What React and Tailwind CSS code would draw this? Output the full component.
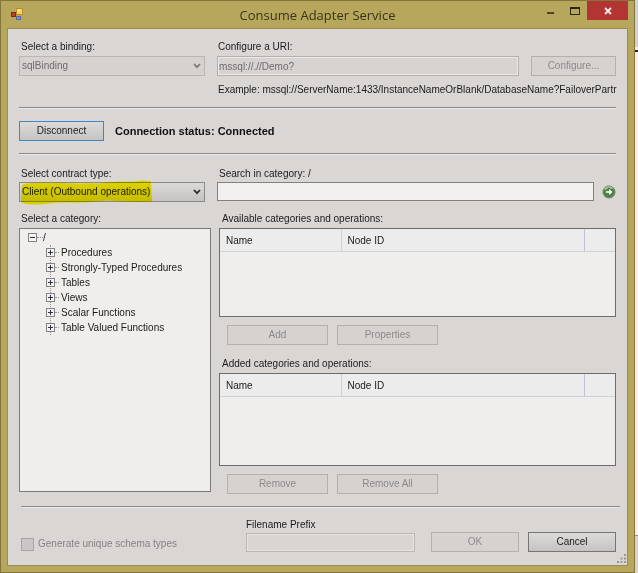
import { useState } from 'react';
import clsx from 'clsx';

const CATEGORIES = [
  'Procedures',
  'Strongly-Typed Procedures',
  'Tables',
  'Views',
  'Scalar Functions',
  'Table Valued Functions',
];

function Button({ className, disabled, focused, children, ...props }) {
  return (
    <button
      type="button"
      disabled={disabled}
      className={clsx(
        'h-5 shrink-0 border text-center leading-[18px]',
        disabled && 'border-[#b3b0ad] bg-[#d5d2d0] text-[#8d8a88]',
        !disabled && 'bg-linear-to-b from-[#dddbda] to-[#c6c4c3] text-[#1c1b1b]',
        !disabled && (focused ? 'border-[#3f88c5]' : 'border-[#777574]'),
        className
      )}
      {...props}
    >
      {children}
    </button>
  );
}

function Divider({ className }) {
  return <hr className={clsx('h-[2px] border-t border-b border-t-[#8b8988] border-b-[#eceae9]', className)} />;
}

function Select({ id, disabled, value, onChange, options, children }) {
  return (
    <div className="relative">
      <select
        id={id}
        disabled={disabled}
        value={value}
        onChange={onChange}
        className={clsx(
          'block h-5 w-full appearance-none border pl-[2px] leading-[18px] opacity-100',
          disabled
            ? 'border-[#b9b6b4] bg-[#d5d2d0] text-[#6f6c6b]'
            : 'border-[#8c8a89] bg-linear-to-b from-[#dcdad9] to-[#c5c3c1] text-[#1c1b1b]'
        )}
      >
        {options.map((o) => (
          <option key={o}>{o}</option>
        ))}
      </select>
      <svg className="pointer-events-none absolute top-[7px] right-1 h-[6px] w-[8px]" viewBox="0 0 8 6" fill="none">
        <path d="M1 1l3 3.2L7 1" stroke={disabled ? '#7b7978' : '#2a2929'} strokeWidth="1.7" />
      </svg>
      {children}
    </div>
  );
}

// Marker stroke over the selected contract type
function Highlight() {
  return (
    <svg
      className="pointer-events-none absolute -top-[2px] left-0 h-[26px] w-[134px] mix-blend-multiply"
      viewBox="0 0 134 26"
    >
      <path
        d="M4 4C14 2 28 3 40 2.500C54 4 66 3 80 3.500C92 1 106 2 116 1.500C122 0 128 1 132 1.500L133 21.500C120 22.500 104 22 90 20.500C76 22 62 23 48 22.500C38 22 30 24 20 24.500C12 25 4 24 2 22C3 17 1 10 4 4Z"
        fill="#fff600"
      />
    </svg>
  );
}

function Expander({ open }) {
  return (
    <svg className="h-[9px] w-[9px] shrink-0" viewBox="0 0 9 9" shapeRendering="crispEdges">
      <rect x="0.5" y="0.5" width="8" height="8" fill="#f3f2f2" stroke="#858382" />
      <path d={open ? 'M2 4.500h5' : 'M2 4.500h5M4.500 2v5'} stroke="#2f3040" />
    </svg>
  );
}

function OperationList({ label, className }) {
  return (
    <div className={clsx('border border-[#6d6b6b] bg-[#efeeed]', className)}>
      <table aria-label={label} className="w-full table-fixed border-collapse">
        <thead>
          <tr className="h-[22px] border-b border-[#cfd0da] bg-[#ececec] text-left">
            <th className="w-[121px] border-r border-[#cfd0da] pt-[2px] pl-[6px] font-normal">Name</th>
            <th className="border-r border-[#c3c4cf] pt-[2px] pl-[6px] font-normal">Node ID</th>
            <th className="w-[31px]" />
          </tr>
        </thead>
        <tbody />
      </table>
    </div>
  );
}

function AppIcon() {
  return (
    <svg className="h-[13px] w-[13px]" viewBox="0 0 13 13">
      <rect x="0.5" y="4.500" width="4" height="4" fill="#b8402c" stroke="#7c2a1e" />
      <rect x="5.500" y="0.5" width="6" height="6" fill="#f3cf62" stroke="#b98d27" />
      <rect x="6.500" y="1.500" width="3" height="2" fill="#fbe9a8" />
      <rect x="5.500" y="8.500" width="4" height="3" fill="#7d90c6" stroke="#5a6ba3" />
    </svg>
  );
}

function TitleBar() {
  return (
    <header className="flex h-[27px] shrink-0 items-start">
      <div className="flex w-[90px] pt-[7px] pl-1">
        <AppIcon />
      </div>
      <h1 className="flex-1 text-center font-['Open_Sans',sans-serif] text-[13px] leading-[28px] text-[#3a3418]">
        Consume Adapter Service
      </h1>
      <div className="flex w-[90px] justify-end">
        <button type="button" aria-label="Minimize" className="flex h-[19px] w-[25px] justify-center pt-[11px]">
          <span className="h-[2px] w-[7px] bg-[#4b4425]" />
        </button>
        <button type="button" aria-label="Maximize" className="flex h-[19px] w-[25px] justify-center pt-[6px]">
          <span className="h-[8px] w-[10px] border border-t-2 border-[#2b2612]" />
        </button>
        <button type="button" aria-label="Close" className="flex h-[19px] w-[41px] justify-center bg-[#b23433] pt-[6px]">
          <svg className="h-2 w-2" viewBox="0 0 8 8">
            <path d="M1 1l6 6M7 1l-6 6" stroke="#f6eceb" strokeWidth="1.8" />
          </svg>
        </button>
      </div>
    </header>
  );
}

export default function App() {
  const [contract, setContract] = useState('Client (Outbound operations)');
  const [search, setSearch] = useState('');

  return (
    <div className="flex min-h-screen bg-[#f7efe4] font-['Liberation_Sans',Arial,sans-serif] text-[10px] leading-4 text-[#1c1b1b]">
      <div className="flex min-w-0 flex-1 flex-col border border-[#84763a] bg-[#b7a75c] px-[6px] pb-[6px]">
        <TitleBar />

        <main className="flex min-w-0 flex-1 flex-col border border-[#9c8d4e] bg-[#d9d6d4] px-[11px] pt-[10px]">
          <section className="flex gap-3">
            <div className="w-[186px] shrink-0">
              <label htmlFor="binding" className="mb-[1px] block pl-[2px]">Select a binding:</label>
              <Select id="binding" disabled value="sqlBinding" options={['sqlBinding']} />
            </div>
            <div className="min-w-0 flex-1">
              <label htmlFor="uri" className="mb-[1px] block pl-[1px]">Configure a URI:</label>
              <div className="flex gap-3">
                <input
                  id="uri"
                  disabled
                  value="mssql://.//Demo?"
                  className="h-5 min-w-0 flex-1 border border-[#b3b0ad] bg-[#d6d3d1] pl-[1px] text-[#6f6c6b] ring-1 ring-[#ebe9e8] ring-inset"
                />
                <Button disabled className="w-[85px]">Configure...</Button>
              </div>
              <p className="mt-[6px] pl-[1px] whitespace-nowrap">
                Example: mssql://ServerName:1433/InstanceNameOrBlank/DatabaseName?FailoverPartr
              </p>
            </div>
          </section>

          <Divider className="mt-[9px]" />

          <section className="mt-3 flex items-center gap-[11px]">
            <Button focused className="w-[85px]">Disconnect</Button>
            <strong className="text-[11px] font-bold text-[#111]">Connection status: Connected</strong>
          </section>

          <Divider className="mt-3" />

          <section className="mt-[11px] flex gap-3">
            <div className="w-[186px] shrink-0">
              <label htmlFor="contract" className="block pl-[2px]">Select contract type:</label>
              <Select
                id="contract"
                value={contract}
                onChange={(e) => setContract(e.target.value)}
                options={['Client (Outbound operations)', 'Service (Inbound operations)']}
              >
                <Highlight />
              </Select>
            </div>
            <div className="min-w-0 flex-1">
              <label htmlFor="search" className="block pl-[2px]">Search in category: /</label>
              <div className="flex items-center gap-2">
                <input
                  id="search"
                  value={search}
                  onChange={(e) => setSearch(e.target.value)}
                  className="h-[19px] min-w-0 flex-1 border border-[#83817f] bg-[#f1f0ef] px-1"
                />
                <button type="button" aria-label="Search">
                  <svg className="h-[14px] w-[14px]" viewBox="0 0 15 15">
                    <circle cx="7.500" cy="7.500" r="6.500" fill="#4f8446" stroke="#6d8f65" />
                    <path d="M3 5a5 5 0 0 1 8-1" stroke="#a3c998" strokeWidth="2" fill="none" />
                    <path d="M3.500 6h3.700V3L12 7.500 7.200 12V9H3.500z" fill="#e9f3e4" stroke="#2f5a2a" strokeWidth="0.8" />
                  </svg>
                </button>
              </div>
            </div>
          </section>

          <section className="mt-[9px] flex flex-1 gap-2">
            <div className="flex w-[192px] shrink-0 flex-col">
              <h2 className="mb-[1px] pl-[2px]">Select a category:</h2>
              <div className="mb-[2px] flex-1 border border-[#7b7979] bg-[#efeeed] pt-[1px] pl-2">
                <div className="flex h-[15px] items-center">
                  <Expander open />
                  <span className="w-[6px] border-t border-dotted border-[#9a9898]" />
                  <span>/</span>
                </div>
                <ul className="ml-[22px] border-l border-dotted border-[#9a9898]">
                  {CATEGORIES.map((name) => (
                    <li key={name} className="-ml-[5px] flex h-[15px] items-center">
                      <Expander />
                      <span className="mr-[2px] w-1 border-t border-dotted border-[#9a9898]" />
                      <span>{name}</span>
                    </li>
                  ))}
                </ul>
              </div>
            </div>

            <div className="flex min-w-0 flex-1 flex-col">
              <h2 className="mb-[1px] pl-[3px]">Available categories and operations:</h2>
              <OperationList label="Available categories and operations" className="grow basis-[89px]" />
              <div className="mt-2 flex gap-[9px] pl-2">
                <Button disabled className="w-[101px]">Add</Button>
                <Button disabled className="w-[101px]">Properties</Button>
              </div>
              <h2 className="mt-[11px] mb-[1px] pl-[3px]">Added categories and operations:</h2>
              <OperationList label="Added categories and operations" className="grow basis-[93px]" />
              <div className="mt-2 flex gap-[9px] pl-2">
                <Button disabled className="w-[101px]">Remove</Button>
                <Button disabled className="w-[101px]">Remove All</Button>
              </div>
            </div>
          </section>

          <Divider className="mt-3 -mr-1 ml-[2px]" />

          <footer className="flex items-end pt-[9px] pb-[13px]">
            <div className="flex w-[227px] shrink-0 items-center gap-1 pl-[2px] text-[#868382]">
              <input
                id="unique"
                type="checkbox"
                disabled
                className="h-[13px] w-[13px] appearance-none border border-[#a8a5a3] bg-[#c9c6c5]"
              />
              <label htmlFor="unique">Generate unique schema types</label>
            </div>
            <div className="min-w-0 flex-1">
              <label htmlFor="prefix" className="block">Filename Prefix</label>
              <input
                id="prefix"
                disabled
                className="block h-[19px] w-full border border-[#b9b6b4] bg-[#d8d5d3] ring-1 ring-[#e6e4e3] ring-inset"
              />
            </div>
            <Button disabled className="ml-4 w-[88px]">OK</Button>
            <Button className="ml-[9px] w-[88px]">Cancel</Button>
          </footer>

          <svg className="-mt-[11px] mb-[2px] -mr-[10px] h-[9px] w-[9px] self-end" viewBox="0 0 9 9" fill="#9a9795">
            <path d="M7 0h2v2H7zM7 3.500h2v2H7zM3.500 3.500h2v2h-2zM7 7h2v2H7zM3.500 7h2v2h-2zM0 7h2v2H0z" />
          </svg>
        </main>
      </div>

      {/* sliver of the window behind */}
      <div className="flex w-[3px] shrink-0 flex-col">
        <div className="h-[47px] bg-[#d3d0d3]" />
        <div className="mt-[3px] h-[2px] bg-[#2b2926]" />
        <div className="mt-auto h-[38px] border-t border-[#8f8b88] bg-[#d9d3cb]" />
      </div>
    </div>
  );
}
